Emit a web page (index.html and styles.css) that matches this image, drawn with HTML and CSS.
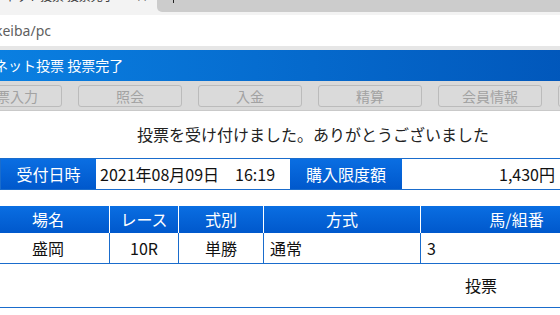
FILE: index.html
```html
<!DOCTYPE html>
<html lang="ja">
<head>
  <meta charset="UTF-8">
  <meta name="viewport" content="width=device-width, initial-scale=1.0">
  <title>ネット投票 投票完了</title>
  <link rel="stylesheet" href="styles.css">
</head>
<body>
  <div class="chrome">
    <div class="tabs">
      <div class="tab-active">
        <span class="tab-title">ネット投票 投票完了</span>
        <span class="tab-close">×</span>
      </div>
      <div class="tab-rest"><span class="tab-sep"></span></div>
    </div>
    <div class="toolbar">
      <div class="url">keiba/pc</div>
    </div>
  </div>

  <div class="page">
    <div class="title-bar">ネット投票 投票完了</div>

    <div class="menu">
      <button>投票入力</button>
      <button>照会</button>
      <button>入金</button>
      <button>精算</button>
      <button>会員情報</button>
      <button>ログアウト</button>
    </div>

    <p class="message">投票を受け付けました。ありがとうございました</p>

    <div class="info">
      <div class="info-label">受付日時</div>
      <div class="info-value">2021年08月09日　16:19</div>
      <div class="info-label">購入限度額</div>
      <div class="info-value right">1,430円</div>
    </div>

    <div class="bets">
      <div class="bets-head">場名</div>
      <div class="bets-head">レース</div>
      <div class="bets-head">式別</div>
      <div class="bets-head">方式</div>
      <div class="bets-head">馬/組番</div>

      <div class="bets-cell center">盛岡</div>
      <div class="bets-cell center">10R</div>
      <div class="bets-cell center">単勝</div>
      <div class="bets-cell">通常</div>
      <div class="bets-cell">3</div>

      <div class="bets-foot">投票</div>
    </div>
  </div>
</body>
</html>
```

FILE: styles.css
```css
body {
  margin: 0;
  width: 560px;
  height: 315px;
  overflow: hidden;
  background: #ffffff;
  font-family: "Noto Sans CJK JP", "Noto Sans", sans-serif;
  color: #111111;
}

/* browser chrome */
.tabs {
  display: flex;
  height: 12px;
  background: #f3f3f3;
}

.tab-active {
  width: 157px;
  height: 12px;
  overflow: hidden;
  position: relative;
}

.tab-title {
  display: block;
  margin-top: -10px;
  padding-left: 4px;
  font-size: 12px;
  line-height: 12px;
  color: #333333;
}

.tab-close {
  position: absolute;
  left: 136px;
  top: -9px;
  font-size: 12px;
  line-height: 12px;
  color: #555555;
}

.tab-rest {
  flex: 1;
  background: #cccccc;
  border-bottom-left-radius: 5px;
  position: relative;
}

.tab-sep {
  position: absolute;
  left: 16px;
  top: 0;
  width: 1px;
  height: 3px;
  background: #222222;
}

.toolbar {
  background: #f3f3f3;
  padding-top: 3px;
  border-bottom: 4px solid #e6e6e6;
}

.url {
  height: 31px;
  background: #ffffff;
  font-family: "Noto Sans", sans-serif;
  font-size: 14px;
  line-height: 31px;
  color: #5f5f5f;
  text-indent: -5px;
}

/* page */
.page {
  margin-left: -13px;
  width: 652px;
}

.title-bar {
  height: 31px;
  line-height: 31px;
  padding-left: 7px;
  font-size: 14px;
  color: #ffffff;
  background: linear-gradient(90deg, #0a80e2, #0052b6);
}

.menu {
  display: flex;
  gap: 16px;
  height: 30px;
  box-sizing: border-box;
  padding-top: 4px;
  margin-left: -29px;
  background: #d9d9d9;
  border-bottom: 1px solid #c9c9c9;
}

.menu button {
  flex: none;
  width: 104px;
  height: 22px;
  padding: 0;
  background: #dadada;
  border: 1px solid #bbbbbb;
  border-radius: 3px;
  font-family: inherit;
  font-size: 14px;
  line-height: 20px;
  color: #a2a2a2;
}

.message {
  margin: 11px 0 0;
  text-align: center;
  font-size: 16px;
  line-height: 24px;
  color: #222222;
}

.info {
  display: grid;
  grid-template-columns: 95px 194px 112px 1fr;
  width: 613px;
  height: 32px;
  box-sizing: border-box;
  margin: 12px 0 0 13px;
  border: 1px solid #1a6ccc;
  font-size: 16px;
  line-height: 30px;
}

.info-label {
  text-align: center;
  color: #ffffff;
  background: linear-gradient(#0a6ee2, #0058cc);
}

.info-value {
  padding-left: 4px;
  white-space: nowrap;
}

.info-value.right {
  text-align: right;
  padding-right: 57px;
}

.bets {
  display: grid;
  grid-template-columns: 123px 69px 85px 157px 1fr;
  width: 626px;
  margin-top: 16px;
  font-size: 16px;
}

.bets-head {
  height: 27px;
  line-height: 27px;
  text-align: center;
  color: #ffffff;
  background: linear-gradient(#0a6ee2, #0058cc);
  border-right: 1px solid #ffffff;
}

.bets-cell {
  height: 30px;
  line-height: 30px;
  padding-left: 6px;
  border-right: 1px solid #1a6ccc;
  border-bottom: 1px solid #1a6ccc;
}

.bets-cell.center {
  padding-left: 0;
  text-align: center;
}

.bets-foot {
  grid-column: 1 / -1;
  height: 43px;
  line-height: 43px;
  padding-left: 478px;
  border-bottom: 1px solid #1a6ccc;
}
```
